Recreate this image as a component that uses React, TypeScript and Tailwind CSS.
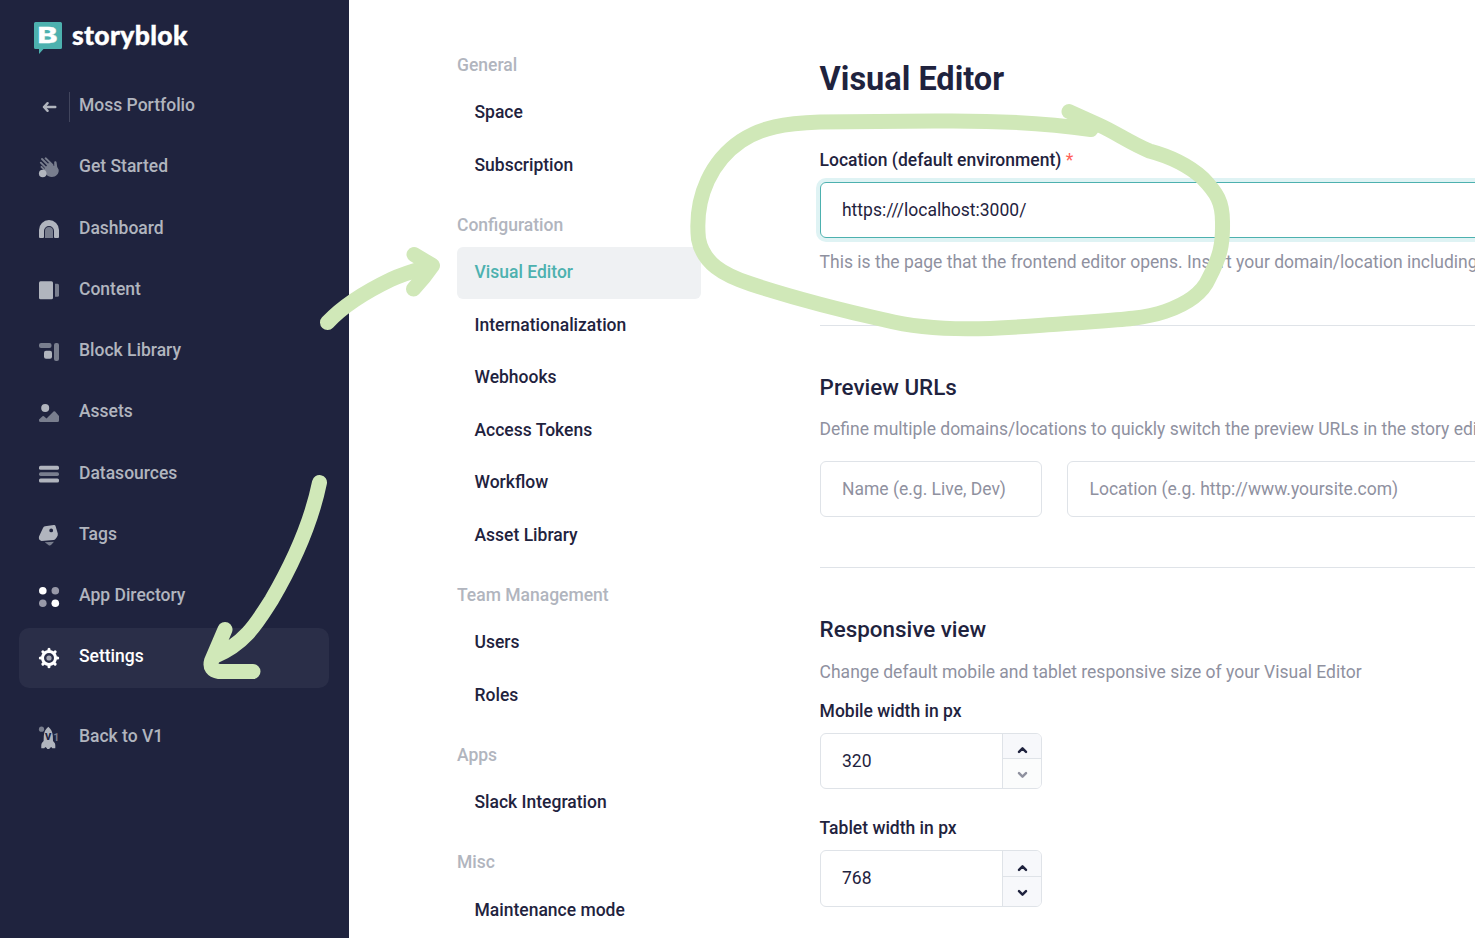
import type { ReactNode } from "react";

const ICON = "#b1b5be";
const DIM = "#797e8e";

function Svg({ children }: { children: ReactNode }) {
  return (
    <svg width="24" height="24" viewBox="0 0 24 24" fill="none" className="shrink-0 overflow-visible">
      {children}
    </svg>
  );
}

const icons: Record<string, ReactNode> = {
  wave: (
    <Svg>
      <g stroke={DIM} strokeWidth="1.9" strokeLinecap="round">
        <path d="M5 3 13 11M8.600 2.300 15.500 8.900M3.800 6.700 11 13.900M4.500 10.800 10 16.300" />
      </g>
      <path d="M12 6.500 17.200 10V6.500c0-1.700 2.200-1.700 2.400 0l.6 4.500 1.400 2.500c.9 4-2.900 7.500-6.700 7.500-2.700 0-4.200-1-6-2.800L6 15z" fill={DIM} />
      <circle cx="5.700" cy="17.500" r="3.800" fill={ICON} />
    </Svg>
  ),
  dashboard: (
    <Svg>
      <path d="M8 21v-7a4 4 0 0 1 8 0v7z" fill={DIM} />
      <path d="M2 20V13a10 10 0 0 1 20 0v7q0 1-1 1h-3q-1 0-1-1v-6a5 5 0 0 0-10 0v6q0 1-1 1H3q-1 0-1-1z" fill={ICON} />
    </Svg>
  ),
  content: (
    <Svg>
      <rect x="2" y="2.300" width="14" height="18" rx="1.500" fill={ICON} />
      <path d="M18 4.800h2.500q1.500 0 1.500 1.500v10q0 1.500-1.500 1.500H18z" fill={DIM} />
    </Svg>
  ),
  blocks: (
    <Svg>
      <rect x="2" y="3" width="12.500" height="5" rx="2" fill={DIM} />
      <rect x="17" y="3" width="5" height="18" rx="2" fill={DIM} />
      <rect x="7" y="10.700" width="8" height="8" rx="2" fill={ICON} />
    </Svg>
  ),
  assets: (
    <Svg>
      <circle cx="8.200" cy="7" r="4" fill={ICON} />
      <path d="M2 18.500 5.500 15.200q.7-.5 1.400 0L9.500 17.500 16.500 10.500q.8-.7 1.600 0L22 15V19.500q0 1.500-1.500 1.500h-17Q2 21 2 19.500z" fill={DIM} />
    </Svg>
  ),
  data: (
    <Svg>
      <rect x="2" y="3.800" width="20" height="4" rx="1.600" fill={ICON} />
      <rect x="2" y="10.300" width="20" height="3.600" rx="1.600" fill={DIM} />
      <rect x="2" y="16.500" width="20" height="4" rx="1.600" fill={ICON} />
    </Svg>
  ),
  tags: (
    <Svg>
      <path
        fillRule="evenodd"
        fill={ICON}
        d="M8 2.300 16.800 1.100q1.500-.2 1.800 1.200L20.800 9.500q.3 2-1 3.700l-1.600 2q-.6.7-1.600.7L4.500 17Q1.200 16 2 12.500L6 4Q6.700 2.500 8 2.300zM14.200 4.500a1.900 1.900 0 1 0 0 3.800 1.900 1.900 0 0 0 0-3.800z"
      />
      <path d="M7.800 18.200 17 17.700 14 21.100q-.8.800-2 .3z" fill={DIM} />
    </Svg>
  ),
  apps: (
    <Svg>
      <circle cx="5.800" cy="5.700" r="3.800" fill="#fff" />
      <circle cx="18.300" cy="5.700" r="3.800" fill="#9899a8" />
      <circle cx="5.800" cy="18.200" r="3.800" fill="#9899a8" />
      <circle cx="18.300" cy="18.200" r="3.800" fill="#fff" />
    </Svg>
  ),
  settings: (
    <Svg>
      <circle cx="12" cy="12" r="6.500" stroke="#fff" strokeWidth="3" />
      <path
        d="M12 3.300V5M12 19v1.700M3.300 12H5M19 12h1.700M5.850 5.850 7 7M17 17l1.150 1.150M18.150 5.850 17 7M7 17l-1.150 1.150"
        stroke="#fff"
        strokeWidth="3"
        strokeLinecap="round"
      />
      <circle cx="12" cy="12" r="2.600" fill="#a5a7b3" />
    </Svg>
  ),
  rocket: (
    <Svg>
      <circle cx="4.500" cy="3.200" r="2.600" fill={DIM} />
      <path
        fill={ICON}
        d="M11.300.8c2.900 2.300 4.300 5.500 4.500 9.200l.2 5 1.700 2q.8 1 .6 5.300h-3l-1-1.200-1.400 1-.6.900h-2l-.6-.9-1.400-1-1 1.200h-3q-.2-4.300.6-5.300l1.700-2 .2-5c.2-3.700 1.600-6.900 4.500-9.200z"
      />
      <text x="7.900" y="14" fontFamily="Roboto, sans-serif" fontSize="9.500" fontWeight="900" fill="#20243e">V</text>
      <text x="16.200" y="14.500" fontFamily="Roboto, sans-serif" fontSize="10.500" fontWeight="700" fill={DIM}>1</text>
    </Svg>
  ),
};

const menu = [
  { icon: "wave", label: "Get Started" },
  { icon: "dashboard", label: "Dashboard" },
  { icon: "content", label: "Content" },
  { icon: "blocks", label: "Block Library" },
  { icon: "assets", label: "Assets" },
  { icon: "data", label: "Datasources" },
  { icon: "tags", label: "Tags" },
  { icon: "apps", label: "App Directory" },
  { icon: "settings", label: "Settings", active: true },
];

const groups = [
  { title: "General", items: ["Space", "Subscription"] },
  {
    title: "Configuration",
    items: ["Visual Editor", "Internationalization", "Webhooks", "Access Tokens", "Workflow", "Asset Library"],
  },
  { title: "Team Management", items: ["Users", "Roles"] },
  { title: "Apps", items: ["Slack Integration"] },
  { title: "Misc", items: ["Maintenance mode"] },
];

function MenuItem({ icon, label, active }: { icon: string; label: string; active?: boolean }) {
  return (
    <a className={`flex h-[60px] shrink-0 items-center rounded-[10px] pl-[18px] ${active ? "bg-[#2a2e48] text-white" : "text-[#b1b5be]"}`}>
      {icons[icon]}
      <span className="ml-[18px] pb-[3.3px]">{label}</span>
    </a>
  );
}

function Sidebar() {
  return (
    <aside className="flex w-[349px] shrink-0 flex-col bg-[#1f233e] pl-[19px] pr-[20px] font-medium">
      <div className="flex h-[76.75px] shrink-0 pl-[15px] pt-[22px]">
        <svg width="28" height="32" viewBox="0 0 28 32" className="shrink-0">
          <path d="M1.500 0h25Q28 0 28 1.500v24q0 1.500-1.500 1.500H9.500L5 32v-5H1.500Q0 27 0 25.500v-24Q0 0 1.500 0z" fill="#4db1af" />
          <text x="3.600" y="20.900" textLength="20" lengthAdjust="spacingAndGlyphs" fontFamily="Inter, sans-serif" fontWeight="800" fontSize="21.500" fill="#fff" stroke="#fff" strokeWidth=".3">
            B
          </text>
        </svg>
        <span className="ml-[10px] mt-[-3px] font-['Lato',sans-serif] text-[26.500px] font-black leading-[32px] tracking-[0.350px] text-white [-webkit-text-stroke:0.400px_white]">
          storyblok
        </span>
      </div>
      <nav className="flex flex-col gap-[1.25px]">
        <a className="flex h-[60px] items-center pl-[23px] text-[#b1b5be]">
          <svg width="15" height="12" viewBox="0 0 15 12" fill="none" stroke="#b1b5be" strokeWidth="2.400" strokeLinecap="round" strokeLinejoin="round">
            <path d="M13.300 6H2M5.600 2.200 1.900 6l3.700 3.800" />
          </svg>
          <span className="ml-[12px] h-[30px] w-px bg-[#41455d]" />
          <span className="ml-[9px] pb-[3px]">Moss Portfolio</span>
        </a>
        {menu.map((m) => (
          <MenuItem key={m.label} {...m} />
        ))}
      </nav>
      <div className="mt-[20px]">
        <MenuItem icon="rocket" label="Back to V1" />
      </div>
    </aside>
  );
}

function SettingsNav() {
  return (
    <nav className="ml-[108px] w-[244px] shrink-0 pt-[32px] font-medium text-[#1f233e]">
      {groups.map((g) => (
        <section key={g.title}>
          <h3 className="h-[55px] pt-[22.700px] leading-[20px] text-[#b1b5be]">{g.title}</h3>
          {g.items.map((item) => (
            <a
              key={item}
              className={`mb-[0.5px] flex h-[52px] items-center rounded-[6px] pb-[2px] pl-[17.5px] ${item === "Visual Editor" ? "bg-[#eff1f3] text-[#4db1af]" : ""}`}
            >
              {item}
            </a>
          ))}
        </section>
      ))}
    </nav>
  );
}

function Chevron({ down, muted }: { down?: boolean; muted?: boolean }) {
  return (
    <svg width="11" height="8" viewBox="0 0 11 8" fill="none" stroke={muted ? "#8f919f" : "#1f233e"} strokeWidth="2.500" strokeLinecap="round" strokeLinejoin="round">
      <path d={down ? "M2 2.200 5.500 5.600 9 2.200" : "M2 5.800 5.500 2.400 9 5.800"} />
    </svg>
  );
}

function NumberField({ label, value, min }: { label: string; value: string; min?: boolean }) {
  return (
    <div>
      <label className="block font-medium leading-[20px]">{label}</label>
      <div className={`mt-[12px] flex w-[222px] overflow-hidden rounded-[6px] border border-[#dfe3e8] ${min ? "h-[56px]" : "h-[57px]"}`}>
        <span className="flex grow items-center pb-[1px] pl-[21.400px]">{value}</span>
        <span className="flex w-[39px] flex-col border-l border-[#dfe3e8] bg-[#f7f8fb]">
          <span className={`flex items-center justify-center border-b border-[#dfe3e8] pl-[1.500px] ${min ? "h-[25px] pt-[7px]" : "h-[26px] pt-[8px]"}`}>
            <Chevron />
          </span>
          <span className={`flex grow items-center justify-center pb-px pl-[1.500px] pt-[4px] ${min ? "bg-[#fbfcfc]" : ""}`}>
            <Chevron down muted={min} />
          </span>
        </span>
      </div>
    </div>
  );
}

function Editor() {
  return (
    <main className="ml-[118.6px] min-w-0 grow whitespace-nowrap text-[#1f233e]">
      <h1 className="mt-[59px] text-[32.500px] font-bold leading-[40px]">Visual Editor</h1>
      <label className="mt-[51px] block font-medium leading-[20px]">
        Location (default environment) <span className="font-normal text-[#ff6159]">*</span>
      </label>
      <div className="mt-[12px] flex h-[56px] w-[700px] items-center rounded-[6px] border border-[#4db1af] pl-[21.400px] shadow-[0_0_0_4px_#dff3f4]">
        https:///localhost:3000/
      </div>
      <p className="mt-[14px] leading-[20px] text-[#8f919f]">
        This is the page that the frontend editor opens. Insert your domain/location including https://
      </p>
      <hr className="mt-[53px] border-[#dfe3e8]" />

      <h2 className="mt-[47px] text-[22.400px] font-medium leading-[28px]">Preview URLs</h2>
      <p className="mt-[18px] leading-[20px] text-[#8f919f]">
        Define multiple domains/locations to quickly switch the preview URLs in the story editor
      </p>
      <div className="mt-[22px] flex gap-[25px] text-[#8f919f]">
        <div className="flex h-[56px] w-[222px] shrink-0 items-center rounded-[6px] border border-[#dfe3e8] pl-[21.400px]">Name (e.g. Live, Dev)</div>
        <div className="flex h-[56px] w-[500px] shrink-0 items-center rounded-[6px] border border-[#dfe3e8] pl-[21.900px]">
          Location (e.g. http://www.yoursite.com)
        </div>
      </div>
      <hr className="mt-[50px] border-[#dfe3e8]" />

      <h2 className="mt-[47px] text-[22.400px] font-medium leading-[28px]">Responsive view</h2>
      <p className="mt-[19px] leading-[20px] text-[#8f919f]">Change default mobile and tablet responsive size of your Visual Editor</p>
      <div className="mt-[19px] flex flex-col gap-[29px]">
        <NumberField label="Mobile width in px" value="320" min />
        <NumberField label="Tablet width in px" value="768" />
      </div>
    </main>
  );
}

function Annotations() {
  return (
    <svg
      className="pointer-events-none absolute left-0 top-0"
      width="1475"
      height="938"
      viewBox="0 0 1475 938"
      fill="none"
      stroke="#d0e8b8"
      strokeWidth="15"
      strokeLinecap="round"
      strokeLinejoin="round"
    >
      <path d="M327.500 322.500C343 306 367 291 391 279.500C405 273 420 269 432 265.500M414 254.500 432.500 265.500Q424 278 413.500 289" />
      <path d="M319.500 482.500C310 529 289 570 271.500 600C258 621 246 643 215 656M225 629.500 211.500 661Q209 670 219 671.500L253 671.500" />
      <path d="M1091 129.500C1030 121 975 120.500 935 121L820 122C784 123.500 762 127 741 141C713 160 694 195 698.500 239C703 263 723 275 751 284C797 299 845 311 885 320C945 335 1015 327 1060 324C1110 320 1140 320 1165 311.500C1190 303 1203 292 1209 278C1220 257 1223 245 1222.500 222C1222.500 202 1217 193 1202.500 178C1188 165 1172 157 1149.500 151C1130 143 1115 132 1099 125L1069 111.500" />
    </svg>
  );
}

export default function App() {
  return (
    <div className="relative flex h-[938px] w-[1475px] overflow-hidden bg-white font-['Roboto',sans-serif] text-[17.500px] leading-[20px]">
      <Sidebar />
      <SettingsNav />
      <Editor />
      <Annotations />
    </div>
  );
}
